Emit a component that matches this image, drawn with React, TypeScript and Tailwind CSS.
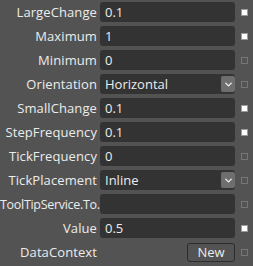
import { ChevronDown } from 'lucide-react'

type Row = {
  label: string
  value?: string
  kind: 'text' | 'select' | 'button'
  set: boolean
}

const rows: Row[] = [
  { label: 'LargeChange', value: '0.1', kind: 'text', set: true },
  { label: 'Maximum', value: '1', kind: 'text', set: true },
  { label: 'Minimum', value: '0', kind: 'text', set: false },
  { label: 'Orientation', value: 'Horizontal', kind: 'select', set: false },
  { label: 'SmallChange', value: '0.1', kind: 'text', set: true },
  { label: 'StepFrequency', value: '0.1', kind: 'text', set: true },
  { label: 'TickFrequency', value: '0', kind: 'text', set: false },
  { label: 'TickPlacement', value: 'Inline', kind: 'select', set: false },
  { label: 'ToolTipService.To...', value: '', kind: 'text', set: false },
  { label: 'Value', value: '0.5', kind: 'text', set: true },
  { label: 'DataContext', kind: 'button', set: false },
]

export default function App() {
  return (
    <div
      className="w-[253px] h-[266px] bg-[#535353] pt-[2px] text-[13px] text-[#ececec] overflow-hidden"
      style={{ fontFamily: '"Open Sans", "Noto Sans", sans-serif' }}
    >
      <div className="flex flex-col gap-[4px]">
        {rows.map(row => (
          <div key={row.label} className="flex items-center h-[20px]">
            {/* label */}
            <div className="w-[97px] shrink-0 text-right whitespace-nowrap leading-[20px] tracking-[0.1px]">
              {row.label.endsWith('...') ? (
                <span className="text-[12.5px] tracking-[-0.3px]">{row.label}</span>
              ) : (
                row.label
              )}
            </div>
            {/* editor */}
            <div className="ml-[3px] w-[135px] h-full flex justify-end">
              {row.kind === 'button' ? (
                <div className="w-[48px] h-[19px] mt-[1px] border border-[#2c2c2c] rounded-[3px] flex items-center justify-center leading-[17px]">
                  New
                </div>
              ) : (
                <div className="w-full h-full bg-[#333333] rounded-[3px] flex items-center pl-[5px] leading-[20px]">
                  <span className="flex-1">{row.value}</span>
                  {row.kind === 'select' && (
                    <div className="w-[14px] h-[16px] bg-[#6e6e6e] rounded-[2px] flex items-center justify-center">
                      <ChevronDown size={11} strokeWidth={3} color="#f0f0f0" />
                    </div>
                  )}
                </div>
              )}
            </div>
            {/* property marker */}
            <div className="flex-1 flex justify-center">
              {row.set ? (
                <div className="w-[7px] h-[7px] bg-white border border-[#9a9a9a]" />
              ) : (
                <div className="w-[7px] h-[7px] border border-[#777777]" />
              )}
            </div>
          </div>
        ))}
      </div>
    </div>
  )
}
